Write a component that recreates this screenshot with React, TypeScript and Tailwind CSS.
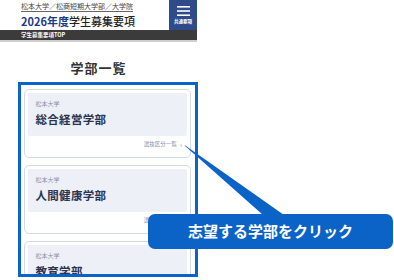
import React from "react";

const jp = { fontFamily: '"Noto Sans CJK JP", "Noto Sans", sans-serif' };

function Card({ name, footer = true }: { name: string; footer?: boolean }) {
  return (
    <div className="flex h-[69px] shrink-0 flex-col rounded-[5px] border-[1.5px] border-[#d3d9e7] bg-white p-[3px]">
      <div className="h-[43px] shrink-0 rounded-[2px] bg-[#edf0f7] pl-[7.5px] pt-[7px]">
        <div className="text-[6px] leading-[7px] text-[#8a91a8]">松本大学</div>
        <div className="mt-[5px] text-[11.5px] font-bold leading-[14px] tracking-[0.3px] text-[#2b3452]">{name}</div>
      </div>
      {footer && (
        <div className="flex flex-1 items-center justify-end pr-[5px] text-[5.5px] text-[#8a91a8]">
          <span>選抜区分一覧</span>
          <span className="ml-[3px] text-[7px] leading-none">›</span>
        </div>
      )}
    </div>
  );
}

export default function App() {
  return (
    <div className="relative h-[280px] w-[394px] overflow-hidden bg-white" style={jp}>
      <div className="w-[197px]">
        {/* header */}
        <div className="flex h-[30px]">
          <div className="flex flex-1 flex-col items-start pl-[21px] pt-[3px]">
            <div className="w-fit border-b-[0.5px] border-[#666] pb-[1px] text-[7px] leading-[7px] text-[#444]">
              松本大学／松商短期大学部／大学院
            </div>
            <div className="mt-[2px] text-[11px] font-bold leading-[14px] text-[#222]">
              <span className="text-[#1f3a8a]">2026年度</span>
              <span className="font-medium">学生募集要項</span>
            </div>
          </div>
          <div className="flex w-[28px] flex-col items-center justify-center bg-[#2f4b8a]">
            <svg width="13" height="10" viewBox="0 0 13 10">
              <rect x="0" y="0" width="13" height="1.6" fill="#fff" />
              <rect x="0" y="4.2" width="13" height="1.6" fill="#fff" />
              <rect x="0" y="8.4" width="13" height="1.6" fill="#fff" />
            </svg>
            <div className="mt-[3px] text-[4.5px] font-bold leading-[5px] text-white">共通要項</div>
          </div>
        </div>
        {/* dark bar */}
        <div className="h-[10px] bg-[#3b3b3b] pl-[21px] text-[5.5px] font-bold leading-[10px] text-white">
          学生募集要項TOP
        </div>
        <div className="h-[1.5px] bg-[#cfcfcf]" />

        {/* title */}
        <div className="mt-[18px] text-center text-[13px] font-bold leading-[16px] tracking-[1px] text-[#333]">
          学部一覧
        </div>

        {/* frame */}
        <div className="ml-[18px] mt-[6px] h-[195px] w-[180px] overflow-hidden border-[3px] border-[#0b63c8] px-[3px] pt-[4px]">
          <div className="flex flex-col gap-[7px] pr-[1px]">
            <Card name="総合経営学部" />
            <Card name="人間健康学部" />
            <Card name="教育学部" />
          </div>
        </div>
      </div>

      {/* pointer */}
      <svg className="pointer-events-none absolute left-0 top-0" width="394" height="280" viewBox="0 0 394 280">
        <polygon points="184,145 263,215 284,215 186,146" fill="#0b63c8" />
      </svg>

      {/* callout */}
      <div className="absolute left-[148px] top-[214px] flex h-[35px] w-[245px] items-center justify-center rounded-[7px] bg-[#0b63c8] text-[15px] font-bold text-white">
        志望する学部をクリック
      </div>
    </div>
  );
}
